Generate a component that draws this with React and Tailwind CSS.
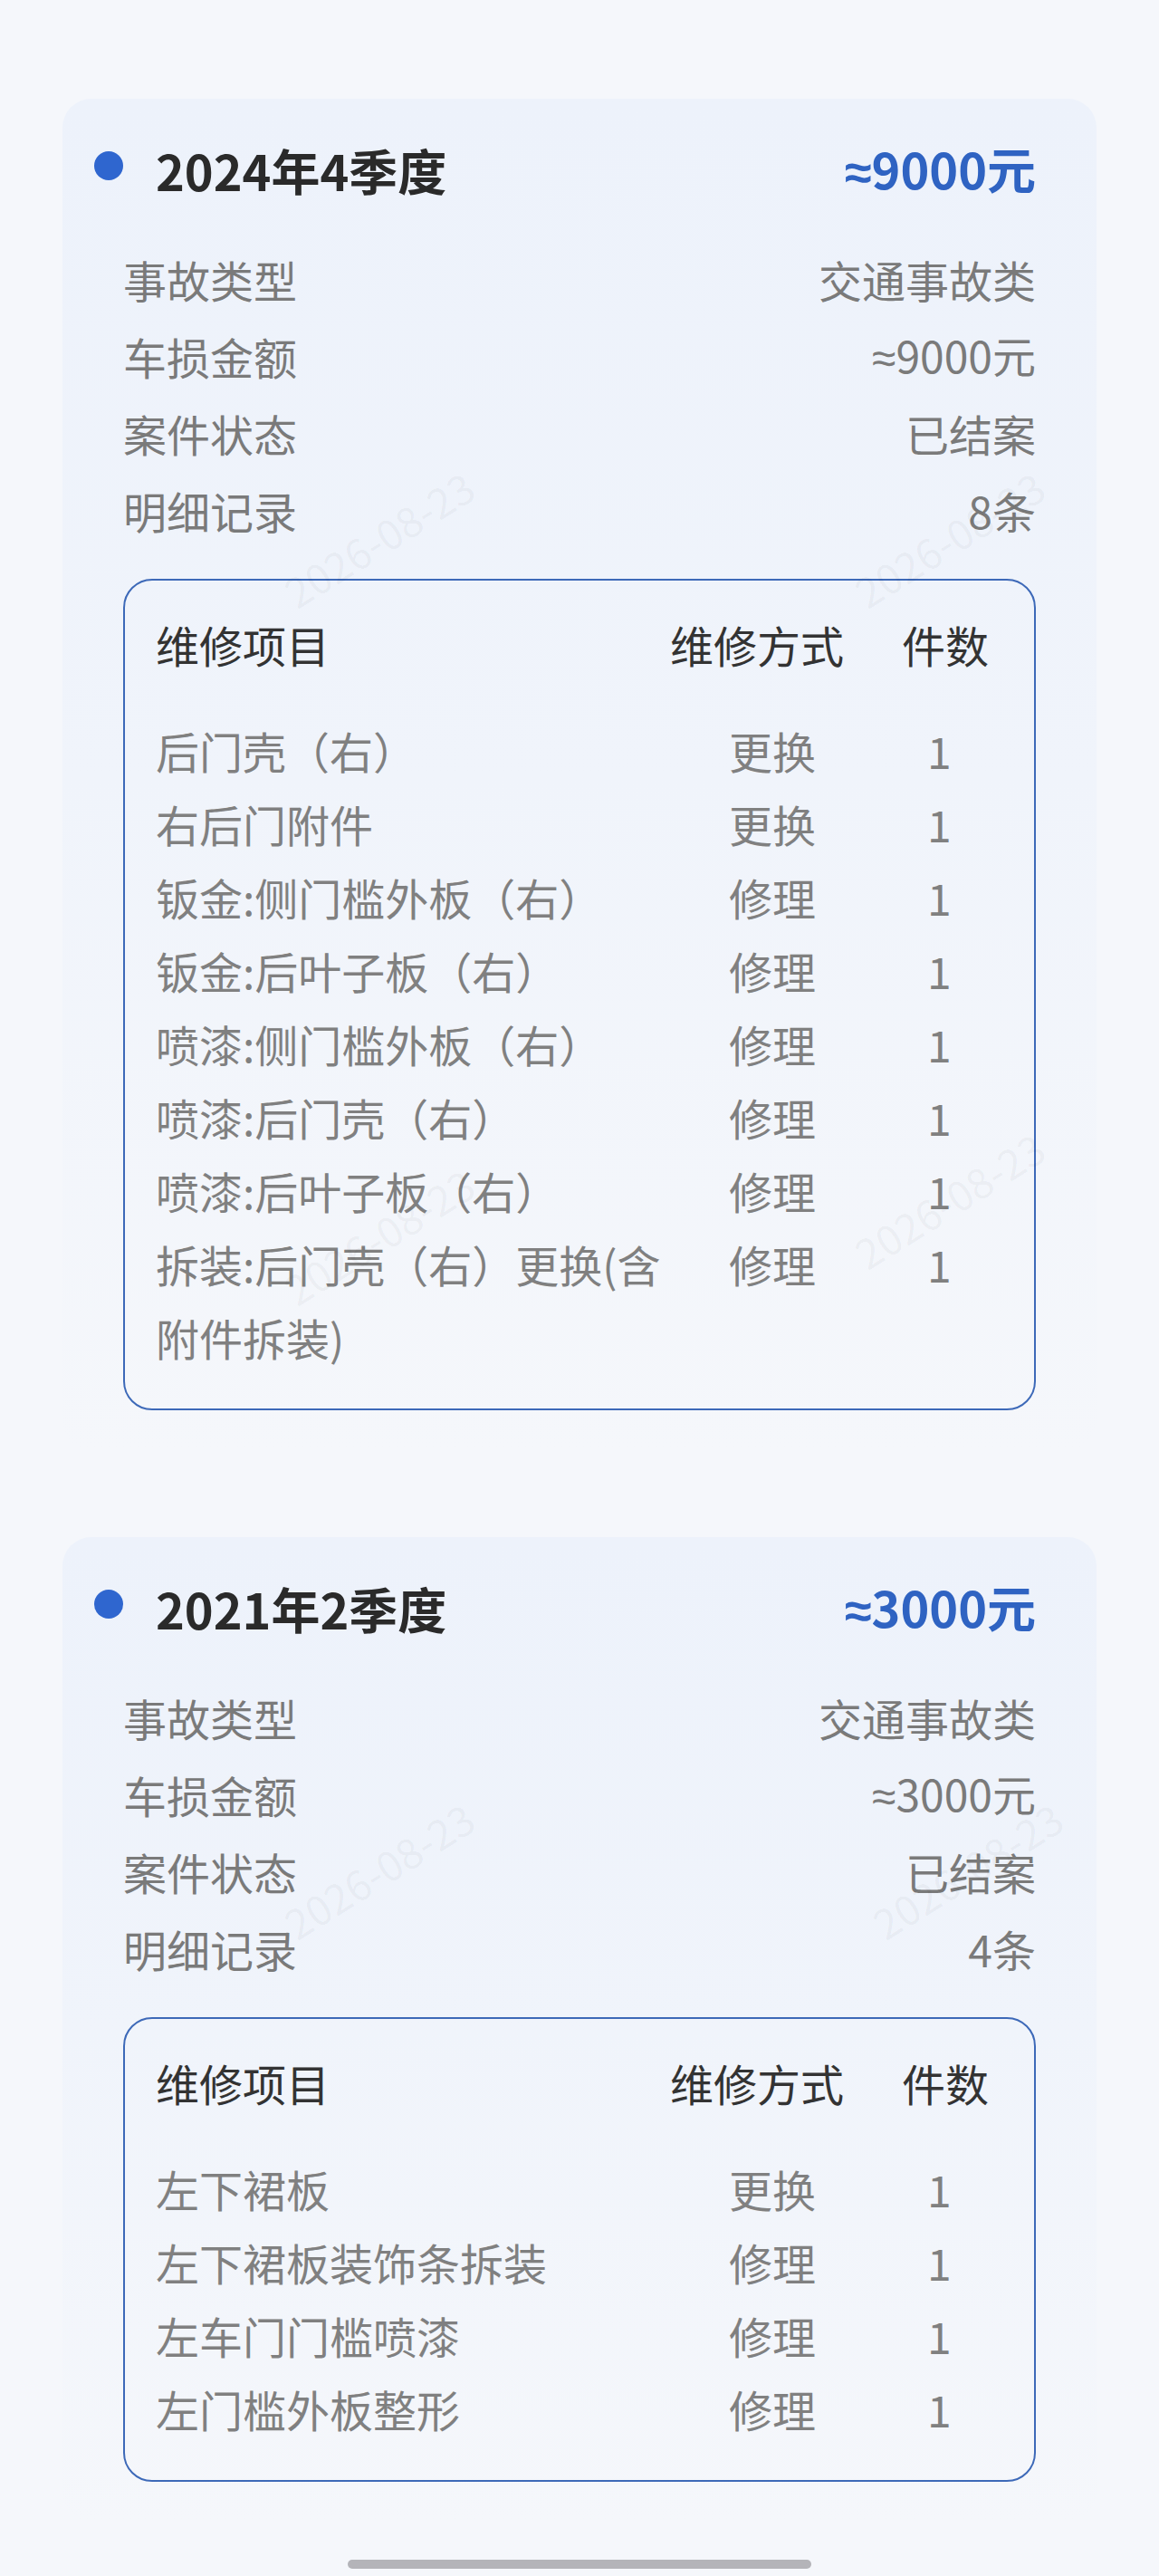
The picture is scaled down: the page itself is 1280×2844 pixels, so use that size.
import React from 'react'

const font = { fontFamily: '"Noto Sans CJK SC", "Noto Sans", sans-serif' }

const claims = [
  {
    quarter: '2024年4季度',
    amount: '9000元',
    info: [
      ['事故类型', '交通事故类'],
      ['车损金额', '≈9000元'],
      ['案件状态', '已结案'],
      ['明细记录', '8条'],
    ],
    items: [
      ['后门壳（右）', '更换', 1],
      ['右后门附件', '更换', 1],
      ['钣金:侧门槛外板（右）', '修理', 1],
      ['钣金:后叶子板（右）', '修理', 1],
      ['喷漆:侧门槛外板（右）', '修理', 1],
      ['喷漆:后门壳（右）', '修理', 1],
      ['喷漆:后叶子板（右）', '修理', 1],
      ['拆装:后门壳（右）更换(含附件拆装)', '修理', 1],
    ],
  },
  {
    quarter: '2021年2季度',
    amount: '3000元',
    info: [
      ['事故类型', '交通事故类'],
      ['车损金额', '≈3000元'],
      ['案件状态', '已结案'],
      ['明细记录', '4条'],
    ],
    items: [
      ['左下裙板', '更换', 1],
      ['左下裙板装饰条拆装', '修理', 1],
      ['左车门门槛喷漆', '修理', 1],
      ['左门槛外板整形', '修理', 1],
    ],
  },
]

function Approx({ text }) {
  // the phone font draws ≈ narrow; CJK font makes it full width
  if (!text.startsWith('≈')) return text
  return (
    <>
      <span style={{ fontFamily: '"Noto Sans", sans-serif' }}>≈</span>
      {text.slice(1)}
    </>
  )
}

function Watermark({ className }) {
  return (
    <div className={`pointer-events-none absolute -rotate-[32deg] select-none text-[46px] text-black/[0.045] ${className}`}>
      2026-08-23
    </div>
  )
}

function ClaimCard({ claim }) {
  return (
    <div className="relative rounded-[32px] bg-gradient-to-b from-[#edf2fb] via-[#f0f4fb] to-[#f5f7fb] px-[67px] pt-[44px] pb-[44px]">
      <div className="-ml-[32px] flex h-[68px] items-center">
        <span className="mr-[36px] h-[32px] w-[32px] shrink-0 -translate-y-[4px] rounded-full bg-[#2f66cf]" />
        <span className="flex-1 text-[54px] font-bold text-[#2a2a2a]">{claim.quarter}</span>
        <span className="text-[54px] font-bold text-[#2f63c2]">
          <Approx text={'≈' + claim.amount} />
        </span>
      </div>

      <div className="mt-[44px]">
        {claim.info.map(([k, v]) => (
          <div key={k} className="flex h-[85px] items-center justify-between text-[48px] text-[#7a7a7a]">
            <span>{k}</span>
            <span><Approx text={v} /></span>
          </div>
        ))}
      </div>

      <div className="mt-[34px] rounded-[32px] border-[2.5px] border-[#3d69b8] pt-[30px] pr-[50px] pb-[38px] pl-[34px]">
        <div className="grid grid-cols-[1fr_256px_96px] text-[48px] leading-[81px] text-[#333]">
          <span>维修项目</span>
          <span>维修方式</span>
          <span>件数</span>
        </div>
        <div className="mt-[36px]">
          {claim.items.map(([name, way, count]) => (
            <div key={name} className="grid grid-cols-[1fr_256px_96px] text-[48px] leading-[81px] text-[#808080]">
              <span>{name}</span>
              <span className="pl-[65px]">{way}</span>
              <span className="pl-[28px]">{count}</span>
            </div>
          ))}
        </div>
      </div>
    </div>
  )
}

export default function App() {
  return (
    <div className="relative h-[2844px] overflow-hidden bg-[#f5f7fb]" style={font}>
      <div className="px-[69px] pt-[109px]">
        <div className="flex flex-col gap-[96px]">
          {claims.map((c) => (
            <ClaimCard key={c.quarter} claim={c} />
          ))}
        </div>
      </div>

      <Watermark className="left-[300px] top-[560px]" />
      <Watermark className="left-[930px] top-[560px]" />
      <Watermark className="left-[300px] top-[1330px]" />
      <Watermark className="left-[930px] top-[1290px]" />
      <Watermark className="left-[300px] top-[2030px]" />
      <Watermark className="left-[950px] top-[2030px]" />

      <div className="absolute top-[2826px] left-[384px] h-[10px] w-[512px] rounded-full bg-[#b4b4b9]" />
    </div>
  )
}
